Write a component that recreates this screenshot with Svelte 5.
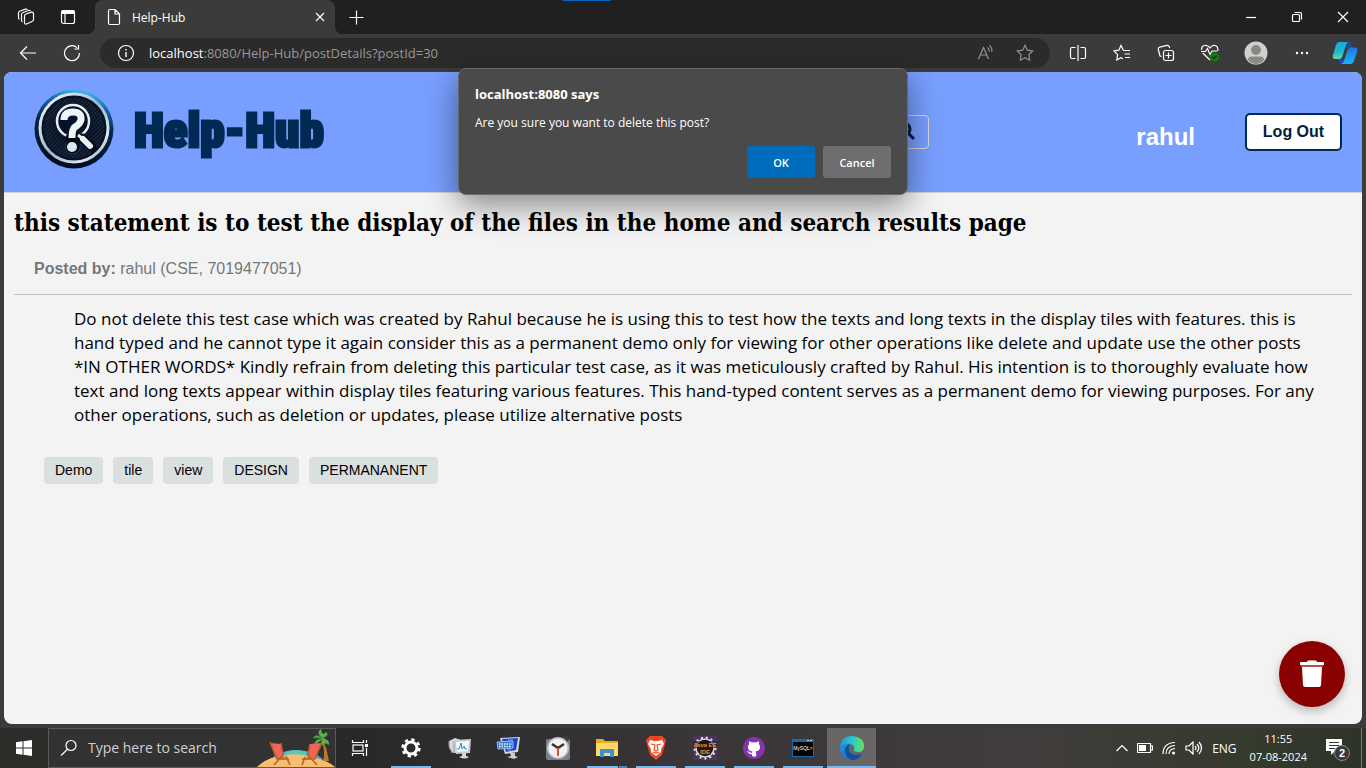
<script>
  const postLines = [
    'Do not delete this test case which was created by Rahul because he is using this to test how the texts and long texts in the display tiles with features. this is',
    'hand typed and he cannot type it again consider this as a permanent demo only for viewing for other operations like delete and update use the other posts',
    '*IN OTHER WORDS* Kindly refrain from deleting this particular test case, as it was meticulously crafted by Rahul. His intention is to thoroughly evaluate how',
    'text and long texts appear within display tiles featuring various features. This hand-typed content serves as a permanent demo for viewing purposes. For any',
    'other operations, such as deletion or updates, please utilize alternative posts'
  ];
  const tags = ['Demo', 'tile', 'view', 'DESIGN', 'PERMANANENT'];
  let query = $state('');
</script>

<div class="screen">
  <div class="titlebar">
    <button class="square" aria-label="Workspaces">
      <svg width="18" height="18" viewBox="0 0 18 18" class="line">
        <path d="M7.500 8Q7.500 6.500 9 6L14.500 4.200Q16.500 3.800 16.500 6V11.500Q16.500 13 15 13.500L9.500 16Q7.500 16.500 7.500 14.500Z" />
        <path d="M5.500 14Q4.500 13.500 4.500 12V6.500Q4.500 5 6 4.500L11.500 2.500Q13 2.200 13.500 3M2.500 11.500Q1.500 11 1.500 9.500V5Q1.500 3.500 3 3L8.500 1.200Q10 1 10.500 1.600" />
      </svg>
    </button>
    <button class="square" aria-label="Tab actions">
      <svg width="16" height="16" viewBox="0 0 16 16" class="line">
        <rect x="1.500" y="1.500" width="13" height="13" rx="2" /><path d="M5 5V14" /><path d="M2 2H14V4.500H2Z" fill="#fff" />
      </svg>
    </button>
    <div class="tab">
      <svg width="14" height="18" viewBox="0 0 14 18" class="line"><path d="M1.500 3Q1.500 1.500 3 1.500H8L12.500 6V15Q12.500 16.500 11 16.500H3Q1.500 16.500 1.500 15Z M8 1.500V6H12.500" /></svg>
      <span>Help-Hub</span>
      <button aria-label="Close tab"><svg width="10" height="10" viewBox="0 0 10 10" class="line"><path d="M1 1 9 9M9 1 1 9" /></svg></button>
    </div>
    <button class="square" aria-label="New tab"><svg width="15" height="15" viewBox="0 0 15 15" class="line"><path d="M7.500 .500V14.500M.500 7.500H14.500" /></svg></button>
    <div class="window-controls">
      <button aria-label="Minimise"><svg width="10" height="10" viewBox="0 0 10 10" class="line"><path d="M0 5.500H10" /></svg></button>
      <button aria-label="Restore"><svg width="12" height="12" viewBox="0 0 12 12" class="line"><rect x="1.500" y="3.500" width="7" height="7" rx="1" /><path d="M3.500 1.500H9Q10.500 1.500 10.500 3V8.500" /></svg></button>
      <button aria-label="Close"><svg width="12" height="12" viewBox="0 0 12 12" class="line"><path d="M1 1 11 11M11 1 1 11" /></svg></button>
    </div>
    <div class="marker"></div>
  </div>

  <div class="toolbar">
    <button class="tool" aria-label="Back"><svg width="18" height="16" viewBox="0 0 18 16" class="line"><path d="M17 8H1.500M8 1.500 1.500 8 8 14.500" /></svg></button>
    <button class="tool" aria-label="Refresh"><svg width="18" height="18" viewBox="0 0 18 18" class="line"><path d="M14 3.600A7.500 7.500 0 1 0 16.500 9M15.500 1V5H11.500" /></svg></button>
    <div class="address">
      <svg width="18" height="18" viewBox="0 0 18 18" class="line"><circle cx="9" cy="9" r="7.500" /><path d="M9 8V13M9 5V6.500" stroke-width="1.400" /></svg>
      <a class="url" href="#post"><b>localhost</b>:8080/Help-Hub/postDetails?postId=30</a>
      <svg class="line dim" width="18" height="18" viewBox="0 0 18 18"><path d="M2.500 15 7.500 3.500 12.500 15M4.300 11H10.700M11.500 3.500Q13.500 5 13.200 7.500M13.500 1.500Q16.500 4 15.800 8" /></svg>
      <svg class="line dim" width="18" height="18" viewBox="0 0 18 18"><path d="M9 1.300 11.300 6.200 16.700 6.900 12.800 10.700 13.700 16.200 9 13.600 4.300 16.200 5.200 10.700 1.300 6.900 6.700 6.200Z" /></svg>
    </div>
    <button class="tool" aria-label="Split screen"><svg width="18" height="18" viewBox="0 0 18 18" class="line"><path d="M6.500 3.500H3Q1.500 3.500 1.500 5V13Q1.500 14.500 3 14.500H6.500M11.500 3.500H15Q16.500 3.500 16.500 5V13Q16.500 14.500 15 14.500H11.500M9 1V17" /></svg></button>
    <button class="tool" aria-label="Favourites"><svg width="18" height="18" viewBox="0 0 18 18" class="line"><path d="M10.500 6.500 8 1.500 5.800 6.200 1 7 4.600 10.600 3.800 16 8 13.700 10 14.700M10.500 6.500H17M11.500 10H17M12 13.500H17" /></svg></button>
    <button class="tool" aria-label="Collections"><svg width="18" height="18" viewBox="0 0 18 18" class="line"><rect x="6.500" y="6.500" width="10" height="10" rx="2" /><path d="M11.500 8.500V14.500M8.500 11.500H14.500M4.500 12.500 3 12 1.300 5.500Q1 3.700 2.500 3.200L10 1.300Q11.800 1.200 12.200 2.500L12.700 4" /></svg></button>
    <button class="tool" aria-label="Browser essentials">
      <svg width="20" height="18" viewBox="0 0 20 18" class="line"><path d="M10 16 2.800 9M1.800 6Q1 2 4.800 1.500 8 1 10 4 12 1 15 1.500 18.500 2.500 17.800 7M1 7.500H5.500L7.500 4.500 10 10.500 12 7H17" /><circle cx="14.500" cy="13" r="4.500" fill="#107c10" stroke="none" /><path d="M12.500 13 14 14.500 16.500 11.800" stroke="#052e05" /></svg>
    </button>
    <button class="tool profile" aria-label="Profile">
      <svg width="24" height="24" viewBox="0 0 24 24"><circle cx="12" cy="12" r="11.500" fill="#d2d0ce" /><circle cx="12" cy="9" r="5" fill="#8a8886" /><path d="M4 19Q4 15.500 8 15.500H16Q20 15.500 20 19 16 23 12 23 8 23 4 19" fill="#8a8886" /></svg>
    </button>
    <button class="tool" aria-label="Settings and more"><svg width="16" height="6" viewBox="0 0 16 6" fill="#fff"><circle cx="3" cy="3" r="1.200" /><circle cx="8" cy="3" r="1.200" /><circle cx="13" cy="3" r="1.200" /></svg></button>
    <button class="tool copilot" aria-label="Copilot">
      <svg width="26" height="24" viewBox="0 0 26 24">
        <defs>
          <linearGradient id="cpA" x1="0" y1="0" x2="0" y2="1"><stop stop-color="#16a8e0" /><stop offset=".6" stop-color="#22bac8" /><stop offset="1" stop-color="#63dca0" /></linearGradient>
          <linearGradient id="cpB" x1="0" y1="0" x2="0" y2="1"><stop stop-color="#2473e8" /><stop offset="1" stop-color="#19b7f4" /></linearGradient>
        </defs>
        <path d="M13 1H17Q19 1 19.500 3L20.500 7H15Z" fill="#174c9c" />
        <path d="M6 18H12L14 23H9Q7.500 23 7 21Z" fill="#1748c9" />
        <path d="M7 1H17Q15 1 14 4L10.500 15Q9.500 18 7 18H3Q0 18 1 14L4 4Q5 1 7 1Z" fill="url(#cpA)" />
        <path d="M19 23H9Q11 23 12 20L15.500 9Q16.500 6.500 19 6.500H23Q26 6.500 25 11L22 20Q21 23 19 23Z" fill="url(#cpB)" />
      </svg>
    </button>
  </div>

  <main class="page" id="post">
    <header>
      <a class="brand" href="#post">
        <svg width="80" height="80" viewBox="0 0 80 80" aria-hidden="true">
          <defs>
            <linearGradient id="rim" x1=".6" y1="0" x2=".4" y2="1"><stop stop-color="#43bdf8" /><stop offset=".18" stop-color="#1766ae" /><stop offset=".45" stop-color="#08254a" /><stop offset="1" stop-color="#020b19" /></linearGradient>
            <linearGradient id="silver" x1="0" y1="0" x2="1" y2="1"><stop stop-color="#fff" /><stop offset=".5" stop-color="#9fb6cc" /><stop offset=".8" stop-color="#dce8f0" /><stop offset="1" stop-color="#6c87a2" /></linearGradient>
            <pattern id="hatch" width="3" height="3" patternUnits="userSpaceOnUse" patternTransform="rotate(45)"><rect width="3" height="3" fill="#0b1626" /><rect width="1" height="3" fill="#25384c" /></pattern>
            <radialGradient id="shade"><stop stop-color="#020a18" /><stop offset="1" stop-color="#071426" stop-opacity=".2" /></radialGradient>
          </defs>
          <circle cx="40" cy="40" r="39.500" fill="url(#rim)" />
          <circle cx="40" cy="39" r="34" fill="#061226" stroke="url(#silver)" stroke-width="3" />
          <circle cx="40" cy="39" r="30" fill="url(#hatch)" />
          <circle cx="40" cy="39" r="30" fill="url(#shade)" />
          <path d="M32 54Q29 65 39 65 48 64 46 54" fill="#020b1a" stroke="#123c62" />
          <circle cx="39" cy="32" r="16" fill="#041327" stroke="#e6eef4" stroke-width="2.500" />
          <path d="M36 49H48L58 58" fill="none" stroke="#000814" stroke-width="9" stroke-linecap="round" />
          <path d="M44 46 49 50" stroke="#e7eef4" stroke-width="3" />
          <path d="M49 50 56 57" stroke="#e7eef4" stroke-width="6" stroke-linecap="round" />
          <path d="M30 31Q30 23 39 23 48 23 47 31 46 35 41 38 38 40 38 49" fill="none" stroke="#eef4f8" stroke-width="7" />
          <circle cx="38" cy="58" r="5" fill="#dce7ee" />
        </svg>
        <span>Help-Hub</span>
      </a>
      <form class="search" onsubmit={(e) => e.preventDefault()}>
        <input type="search" aria-label="Search posts" bind:value={query} />
        <button aria-label="Search"><svg width="22" height="22" viewBox="0 0 22 22" fill="none" stroke="#021d3d" stroke-width="3"><circle cx="11" cy="8" r="6" /><path d="M15 12 21 18" /></svg></button>
      </form>
      <span class="user">rahul</span>
      <button class="logout">Log Out</button>
    </header>

    <article>
      <h1>this statement is to test the display of the files in the home and search results page</h1>
      <p class="author"><b>Posted by:</b> rahul (CSE, 7019477051)</p>
      <hr />
      <p class="body">{#each postLines as line}<span>{line}</span>{/each}</p>
      <ul class="tags">{#each tags as tag}<li>{tag}</li>{/each}</ul>
    </article>

    <button class="delete" aria-label="Delete post">
      <svg width="24" height="28" viewBox="0 0 24 28"><path d="M0 3Q0 2 1 2H7L8 .500H16L17 2H23Q24 2 24 3V5H0Z" fill="#fff" /><path d="M1 5H23V7H1Z" fill="#b45050" /><path d="M2 7H22L21 25Q20.800 27 19 27H5Q3.200 27 3 25Z" fill="#fff" /></svg>
    </button>
  </main>

  <div class="dialog" role="dialog" aria-labelledby="dialog-title">
    <h2 id="dialog-title">localhost:8080 says</h2>
    <p>Are you sure you want to delete this post?</p>
    <div class="actions"><button class="ok">OK</button><button>Cancel</button></div>
  </div>

  <footer class="taskbar">
    <button class="start" aria-label="Start"><svg width="16" height="16" viewBox="0 0 16 16" fill="#fff"><path d="M0 2.200 6.500 1.300V7.500H0ZM7.500 1.200 16 0V7.500H7.500ZM0 8.500H6.500V14.700L0 13.800ZM7.500 8.500H16V16L7.500 14.800Z" /></svg></button>
    <label class="find">
      <svg width="18" height="18" viewBox="0 0 18 18" class="line"><circle cx="11" cy="6.500" r="5" /><path d="M7.500 10.300 1 16.500" /></svg>
      <input type="text" aria-label="Search Windows" placeholder="Type here to search" />
      <svg class="beach" width="78" height="38" viewBox="0 0 78 38">
        <path d="M14 31Q20 22 38 21 58 21 66 31Z" fill="#49a7df" /><path d="M29 23Q38 19 49 23V27H29Z" fill="#58c9ad" />
        <path d="M0 38Q10 28 28 26 42 24 55 28 72 32 78 38Z" fill="#f6bd73" />
        <path d="M64 10Q69 22 66 32H72Q70 20 66 10Z" fill="#b87824" />
        <path d="M65 9Q59 4 56 9 61 8 65 10 58 9 57 17 62 12 65 11 63 16 67 17 67 12 72 16 73 11 66 9 73 6 69 3 65 8 64 0 59 3 64 8" fill="#62b24e" stroke="#38802f" stroke-width=".600" />
        <path d="M13 14 24 15 26 27 31 30H19Z" fill="#f4625f" /><path d="M13 13 20 30 32 30M24 14 26 26 17 36M29 27 33 36" fill="none" stroke="#b0641c" stroke-width="1.500" />
        <path d="M53 15 65 14 59 29 47 31 51 27Z" fill="#f4625f" /><path d="M65 13 58 30 45 30M53 15 51 26 60 36M48 28 45 36" fill="none" stroke="#b0641c" stroke-width="1.500" />
      </svg>
    </label>
    <button class="view" aria-label="Task view"><svg width="18" height="16" viewBox="0 0 18 16" class="line"><path d="M1.500 0V2.500H12.500V0M1.500 16V13.500H12.500V16M15.500 0V3M15.500 8V16" /><rect x="2" y="5" width="10" height="6" /><path d="M14 4H17V7H14Z" fill="#fff" stroke="none" /></svg></button>
    <nav aria-label="Applications">
      <button class="app running" aria-label="Settings"><svg width="20" height="20" viewBox="0 0 20 20" fill="none" stroke="#fff"><circle cx="10" cy="10" r="6" stroke-width="3" /><circle cx="10" cy="10" r="8.400" stroke-width="2.500" stroke-dasharray="3.300 3.300" /></svg></button>
      <button class="app" aria-label="Resource monitor"><svg width="26" height="24" viewBox="0 0 26 24"><path d="M2 5 8 2 14 4 13 17 6 17 2 12Z" fill="#d5d8d8" /><path d="M5 17 2 10V5M7 5V17" stroke="#929797" fill="none" /><path d="M7 4 24 3 23 17 9 18Z" fill="#c9ced0" /><path d="M9 6 22 5 21 15 10 16Z" fill="#f5fbff" /><path d="M10 13H12L14 7 15 13 17 10 18 13H20" fill="none" stroke="#258abd" /><path d="M15 17H19V20L22 21Q18 24 12 21L15 20Z" fill="#d5d8d8" /></svg></button>
      <button class="app" aria-label="On-screen keyboard"><svg width="26" height="24" viewBox="0 0 26 24"><path d="M4 2 24 1 22 16 9 18Z" fill="#d6d9e2" /><path d="M6 3 22 2 20 14 10 16Z" fill="#1f3fd0" /><path d="M12 3 17 2 15 15 11 15Z" fill="#4c76e4" /><path d="M1 6 17 5V12L2 13Z" fill="#3978d4" stroke="#8dbcf4" /><path d="M3 8H16M3 10.500H15" stroke="#e3f5ff" stroke-width="1.500" stroke-dasharray="1.500 1" /><path d="M14 17H19V20L22 21 18 23 11 21 15 20Z" fill="#c9ced2" /></svg></button>
      <button class="app" aria-label="Clock"><svg width="24" height="24" viewBox="0 0 24 24"><rect y="3" width="24" height="21" rx="2" fill="#77818a" /><circle cx="20" cy="3" r="3" fill="#3b3d3f" /><circle cx="12" cy="12" r="11" fill="#b9bfc4" /><circle cx="12" cy="12" r="9.500" fill="#f2f2f2" /><path d="M6 8 12 12 18 8" fill="none" stroke="#333" stroke-width="2.500" /><path d="M12 12V20" stroke="#df4c25" stroke-width="2" /></svg></button>
      <button class="app running split" aria-label="File Explorer"><svg width="22" height="20" viewBox="0 0 22 20"><path d="M0 1H7L9 3H22V18H0Z" fill="#e9a923" /><path d="M0 5H22V18H0Z" fill="#ffd866" /><path d="M4 11H18V19H14V15H8V19H4Z" fill="#3e91d4" /></svg></button>
      <button class="app running" aria-label="Brave"><svg width="22" height="24" viewBox="0 0 22 24"><path d="M5 0H17L21 4 20 8 17 19 11 24 5 19 2 8 1 4Z" fill="#f24820" /><path d="M5 4 9 5H13L17 4 19 8 16 13 16 16 11 20 6 16 6 13 3 8Z" fill="#fff" /><path d="M6 8 10 9 9 14 11 15 13 14 12 9 16 8M8 16 11 17 14 16" fill="none" stroke="#f24820" stroke-width="1.200" /></svg></button>
      <button class="app running" aria-label="Java EE IDE"><svg width="24" height="24" viewBox="0 0 24 24"><path d="M0 0H24V24H0Z" fill="#49355f" /><circle cx="12" cy="12" r="9" fill="#1c1b20" stroke="#d8d8d8" stroke-width="1.500" /><circle cx="12" cy="12" r="10.500" fill="none" stroke="#e5e5e5" stroke-width="2" stroke-dasharray="2 3" /><path d="M0 5H24V12H18V19H6V12H0Z" fill="#1c1b20" opacity=".6" /><text x="12" y="11" class="ide">Java EE</text><text x="12" y="18" class="ide">IDE</text></svg></button>
      <button class="app running" aria-label="GitHub Desktop"><svg width="22" height="22" viewBox="0 0 22 22"><circle cx="11" cy="11" r="11" fill="#8534ad" /><path d="M9 19V17Q6 18 5 15L4 14Q6 14 7 15.500 8 16 9 15.500L9.500 14.500Q5 14 5 10 5 8.500 6 7.300L6 4.500Q8 4.500 9 5.500 11 5 13 5.500 14 4.500 16 4.500V7.300Q17 8.500 17 10 17 14 12.500 14.500 13.500 15.500 13.300 19Q11 20 9 19Z" fill="#fff" /></svg></button>
      <button class="app running" aria-label="MySQL command line"><svg width="22" height="20" viewBox="0 0 22 20"><path d="M0 1H22V19H0Z" fill="#1768af" /><path d="M1 4H21V18H1Z" fill="#050505" /><path d="M15 2.500H17M18 2.500H20" stroke="#c4e0f6" /><text x="11" y="12" class="mysql">MySQL&gt;</text></svg></button>
      <button class="app running active" aria-label="Microsoft Edge"><svg width="24" height="24" viewBox="0 0 24 24">
        <defs><linearGradient id="edgeTop"><stop stop-color="#2399e2" /><stop offset=".5" stop-color="#28c6d4" /><stop offset="1" stop-color="#68e753" /></linearGradient><linearGradient id="edgeLow" x1="0" y1="0" x2="1" y2="1"><stop stop-color="#2193e3" /><stop offset="1" stop-color="#1761b0" /></linearGradient></defs>
        <path d="M0 12Q1 0 12 0 24 1 24 10 24 16 18 16 13 16 14 13 15 9 10 8 3 7 0 12Z" fill="url(#edgeTop)" />
        <path d="M0 12Q3 7 10 8 8 11 9 15 11 21 22 18 18 24 12 24 1 24 0 12Z" fill="url(#edgeLow)" />
        <path d="M10 8Q4 10 5 16 6 22 12 24 18 24 22 18 11 21 9 14 8 11 10 8Z" fill="#164f9d" />
      </svg></button>
    </nav>
    <div class="tray">
      <svg width="12" height="8" viewBox="0 0 12 8" class="line"><path d="M.500 7 6 1.500 11.500 7" /></svg>
      <svg width="16" height="10" viewBox="0 0 16 10" class="line"><path d="M.500.500H13.500V9.500H.500ZM14 3H15.500V7H14" /><path d="M2 2H9V8H2Z" fill="#fff" stroke="none" /></svg>
      <svg width="14" height="14" viewBox="0 0 14 14" class="line"><path d="M1 13Q1 2 13 1.500M4 13Q4 5 13 4.500M7 13Q7 8 13 7.500" /><circle cx="11.500" cy="12" r="1.500" fill="#fff" stroke="none" /></svg>
      <svg width="18" height="14" viewBox="0 0 18 14" class="line"><path d="M1 5H4L8 1V13L4 9H1ZM10 5Q12 7 10 9M12 3Q15.500 7 12 11M14 1Q19 7 14 13" /></svg>
      <span>ENG</span>
      <time datetime="2024-08-07T11:55"><span>11:55</span><span>07-08-2024</span></time>
      <button class="notice" aria-label="Notifications"><svg width="26" height="26" viewBox="0 0 26 26"><path d="M1 4H17V16H10L6 20V16H1Z" fill="#fff" /><path d="M4 7.500H14M4 10.500H14M4 13.500H10" stroke="#353830" /><circle cx="17" cy="18" r="7.500" fill="#36383a" stroke="#8a8c8a" /><text x="17" y="22" class="count">2</text></svg></button>
    </div>
  </footer>
</div>

<style>
  :global(body) { background: #3b3b3b; }
  * { box-sizing: border-box; }
  button { padding: 0; border: 0; background: none; color: inherit; font: inherit; display: flex; align-items: center; justify-content: center; }
  svg { flex: none; display: block; }
  a { color: inherit; text-decoration: none; }
  .line { fill: none; stroke: #fff; stroke-width: 1.2; }
  .screen { position: relative; display: flex; flex-direction: column; min-height: 100vh; background: #3b3b3b; color: #fff; font-family: "Segoe UI", "Open Sans", sans-serif; font-size: 12px; }

  .titlebar { display: flex; height: 34px; padding-left: 5px; background: #202020; position: relative; }
  .square { width: 42px; }
  .tab { position: relative; display: flex; align-items: center; gap: 11px; width: 240px; margin-left: 6px; padding: 0 10px 0 12px; background: #3b3b3b; border-radius: 8px 8px 0 0; font-size: 12px; }
  .tab::before, .tab::after { content: ""; position: absolute; bottom: 0; width: 8px; height: 8px; }
  .tab::before { right: 100%; background: radial-gradient(circle at 0 0, #202020 8px, #3b3b3b 8px); }
  .tab::after { left: 100%; background: radial-gradient(circle at 100% 0, #202020 8px, #3b3b3b 8px); }
  .tab button { margin-left: auto; }
  .window-controls { display: flex; margin-left: auto; }
  .window-controls button { width: 46px; }
  .marker { position: absolute; top: 0; left: 563px; width: 48px; height: 1px; background: #0067c0; }

  .toolbar { display: flex; align-items: center; height: 38px; padding-left: 6px; }
  .tool { width: 44px; height: 32px; }
  .profile { width: 48px; }
  .copilot { width: 42px; }
  .address { flex: 1; display: flex; align-items: center; height: 30px; margin: 0 6px; padding: 0 16px 0 17px; border-radius: 15px; background: #2b2b2b; }
  .url { flex: 1; margin-left: 14px; font-size: 13px; color: #989898; }
  .url b { font-weight: 400; color: #fff; }
  .dim { stroke: #919191; margin-left: 22px; }

  .page { position: relative; flex: 1; margin: 0 4px 4px; border-radius: 8px; overflow: hidden; background: #f3f3f3; color: #000; font-family: "Liberation Sans", Arial, sans-serif; }
  header { display: flex; align-items: center; height: 121px; padding: 0 20px 0 30px; background: #789fff; border-bottom: 1px solid #d3d3d3; }
  .brand { display: flex; align-items: center; gap: 20px; margin: 0 auto 6px 0; }
  .brand span { padding-top: 4px; font: 900 49px/64px Impact, "Liberation Sans Narrow", "Roboto Condensed", "Open Sans Condensed", "Liberation Sans", sans-serif; color: #002a54; -webkit-text-stroke: 3px #002a54; }
  .search { display: flex; width: 420px; height: 34px; border: 1px solid #d5d5d5; border-radius: 4px; }
  .search input { flex: 1; min-width: 0; border: 0; outline: 0; background: transparent; }
  .search button { width: 48px; }
  .user { margin: 10px 50px 0 207px; color: #fff; font-size: 24px; font-weight: 700; line-height: 28px; }
  .logout { width: 97px; height: 38px; border: 2px solid #002a54; border-radius: 5px; background: #fff; color: #001e3c; font-size: 16px; font-weight: 700; }
  article { padding: 12px 10px; }
  h1 { margin: 0; font: 700 24px/36px Georgia, "DejaVu Serif Condensed", "DejaVu Serif", serif; white-space: nowrap; }
  .author { margin: 18px 20px 0; color: #777; font-size: 16px; line-height: 20px; }
  hr { margin: 15px 0 0; border: 0; border-top: 1px solid #c2c2c2; }
  .body { margin: 12px 40px 0 60px; font: 400 17px/24px "Segoe UI", "Open Sans", sans-serif; }
  .body span { display: block; white-space: nowrap; }
  .tags { display: flex; gap: 10px; margin: 30px 30px 0; padding: 0; list-style: none; }
  .tags li { padding: 0 11px; border-radius: 4px; background: #dadfdf; font-size: 14px; line-height: 27px; }
  .delete { position: absolute; right: 17px; bottom: 17px; width: 66px; height: 66px; border-radius: 50%; background: #8b0000; box-shadow: 0 4px 10px rgba(0, 0, 0, .25); }

  .dialog { position: absolute; top: 68px; left: 50%; width: 450px; transform: translateX(-50%); padding: 15px 16px 16px; border: 1px solid #696969; border-radius: 8px; background: #4a4a4a; box-shadow: 0 10px 32px rgba(0, 0, 0, .45); }
  .dialog h2 { margin: 0; font-size: 13px; line-height: 20px; font-weight: 700; }
  .dialog p { margin: 9px 0 13px; font-size: 12px; line-height: 20px; }
  .actions { display: flex; justify-content: flex-end; gap: 8px; }
  .actions button { width: 68px; height: 32px; border-radius: 3px; background: #6e6e6e; font-size: 11px; font-weight: 600; }
  .actions .ok { background: #006cbe; }

  .taskbar { display: flex; height: 40px; background: linear-gradient(90deg, #2d2e29, #292829 26%, #393538 50%, #413d3d 75%, #343a2c 92%, #2d3327); }
  .start { width: 48px; }
  .find { display: flex; align-items: center; width: 288px; border: 1px solid #5a5a5a; background: #323232; padding-left: 11px; }
  .find input { flex: 1; min-width: 0; margin-left: 10px; padding: 0; border: 0; outline: 0; background: none; font: 14px/20px "Segoe UI", "Open Sans", sans-serif; }
  .find input::placeholder { color: #d0d0d0; opacity: 1; }
  .view { width: 48px; }
  nav { display: flex; margin-left: 2px; }
  .app { position: relative; width: 49px; }
  .running::after { content: ""; position: absolute; bottom: 0; left: 5px; right: 4px; height: 2px; background: #76b9ed; }
  .split::after { background: linear-gradient(90deg, #76b9ed 31px, #294a65 31px, #294a65 32px, #5087b2 32px); }
  .active { background: #686667; }
  .active::after { left: 0; right: 0; }
  .ide, .mysql, .count { font-family: "Liberation Sans", sans-serif; text-anchor: middle; }
  .ide { font-size: 6px; font-weight: 700; fill: #f68a28; }
  .mysql { font-size: 5px; fill: #fff; }
  .count { font-size: 11px; font-weight: 700; fill: #fff; }
  .tray { display: flex; align-items: center; gap: 9px; margin: 0 4px 0 auto; padding-right: 10px; border-right: 1px solid #777a70; font-size: 12px; }
  time { display: flex; flex-direction: column; align-items: center; margin-left: 4px; font-size: 11px; line-height: 18px; }
  .notice { margin-left: 9px; }
</style>
